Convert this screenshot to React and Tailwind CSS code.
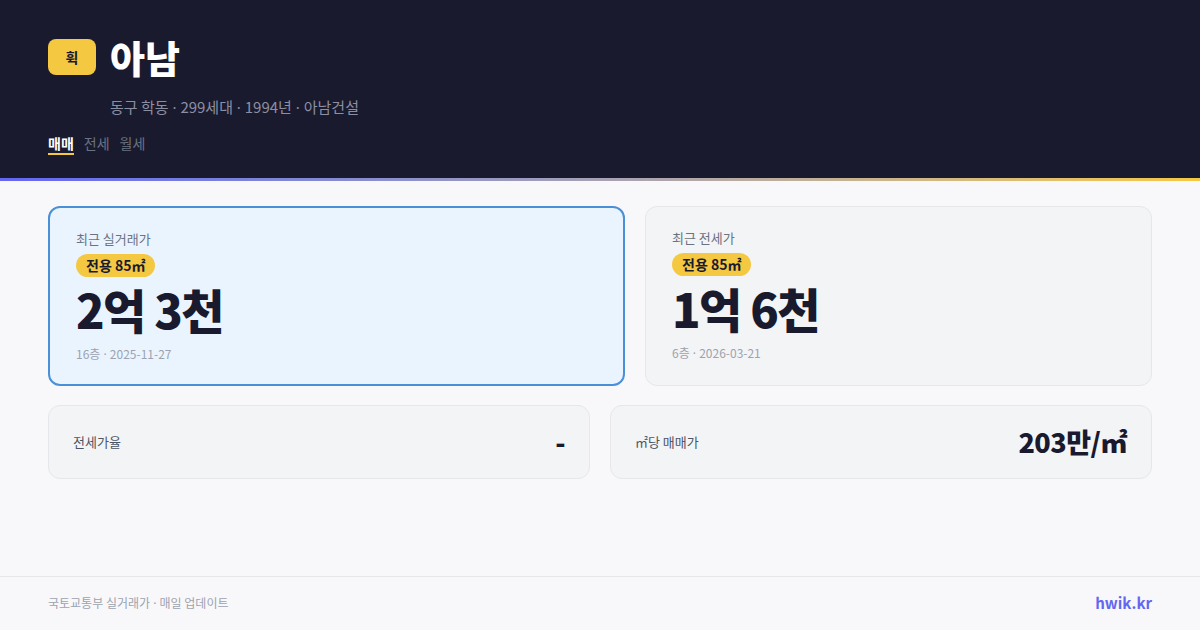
import React from 'react';

const font = { fontFamily: '"Noto Sans CJK KR", "Noto Sans", sans-serif' };

// narrow middle dot, the CJK face draws it full width
const Dot = () => <span className="font-['Noto_Sans',sans-serif]"> · </span>;

const PriceCard = ({ label, area, price, meta, active }) => (
  <div
    className={`rounded-xl pt-[22px] px-[26px] pb-[21px] ${
      active ? 'w-[577px] border-2 border-[#4a90d9] bg-[#eaf4ff]' : 'flex-1 border border-[#e5e7eb] bg-[#f3f4f6]'
    }`}
  >
    <div className="text-[13px] leading-[18px] text-[#6b7280]">{label}</div>
    <div className="mt-[6px] inline-flex h-[23px] items-center rounded-full bg-[#f5c842] px-[10px] text-[14px] font-bold text-[#1a1a2e]">
      {area}
    </div>
    <div className="mt-[5px] text-[47px] leading-[54px] font-black tracking-[-1.5px] text-[#1a1a2e]">{price}</div>
    <div className="mt-[10px] text-[12px] leading-[16px] text-[#9ca3af]">
      {meta[0]}
      <Dot />
      {meta[1]}
    </div>
  </div>
);

const StatCard = ({ label, value }) => (
  <div className="flex h-[74px] flex-1 items-center justify-between rounded-xl border border-[#e5e7eb] bg-[#f3f4f6] px-6">
    <span className="text-[13px] text-[#4b5563]">{label}</span>
    <span className="text-[27px] font-black tracking-[-0.5px] text-[#1a1a2e]">{value}</span>
  </div>
);

export default function App() {
  return (
    <div className="flex h-[630px] w-[1200px] flex-col bg-[#f8f8fa]" style={font}>
      <header className="bg-[#1a1a2e] px-12 pt-[35px] pb-[23px]">
        <div className="flex h-[44px] items-center gap-3.5">
          <div className="flex h-9 w-12 items-center justify-center rounded-lg bg-[#f5c842] text-[14px] font-bold text-[#1a1a2e]">
            휙
          </div>
          <h1 className="text-[38px] leading-[44px] font-extrabold text-white">아남</h1>
        </div>
        <div className="mt-[18px] pl-[62px] text-[15px] leading-5 text-[#8b8fa3]">
          동구 학동<Dot />299세대<Dot />1994년<Dot />아남건설
        </div>
        <nav className="mt-4 flex gap-[10px] text-[14px] leading-5">
          <span className="border-b-2 border-[#f5c842] font-bold text-white">매매</span>
          <span className="text-[#6b7280]">전세</span>
          <span className="text-[#6b7280]">월세</span>
        </nav>
      </header>
      <div className="h-[3px] bg-gradient-to-r from-[#6366f1] to-[#f5c842]" />

      <main className="flex-1 px-12 pt-[25px]">
        <div className="flex gap-5">
          <PriceCard active label="최근 실거래가" area="전용 85㎡" price="2억 3천" meta={['16층', '2025-11-27']} />
          <PriceCard label="최근 전세가" area="전용 85㎡" price="1억 6천" meta={['6층', '2026-03-21']} />
        </div>
        <div className="mt-[19px] flex gap-5">
          <StatCard label="전세가율" value="-" />
          <StatCard label="㎡당 매매가" value="203만/㎡" />
        </div>
      </main>

      <footer className="flex h-[54px] items-center justify-between border-t border-[#e5e7eb] px-12">
        <span className="text-[12px] text-[#9ca3af]">
          국토교통부 실거래가<Dot />매일 업데이트
        </span>
        <span className="text-[15px] font-bold text-[#6366f1]">hwik.kr</span>
      </footer>
    </div>
  );
}
